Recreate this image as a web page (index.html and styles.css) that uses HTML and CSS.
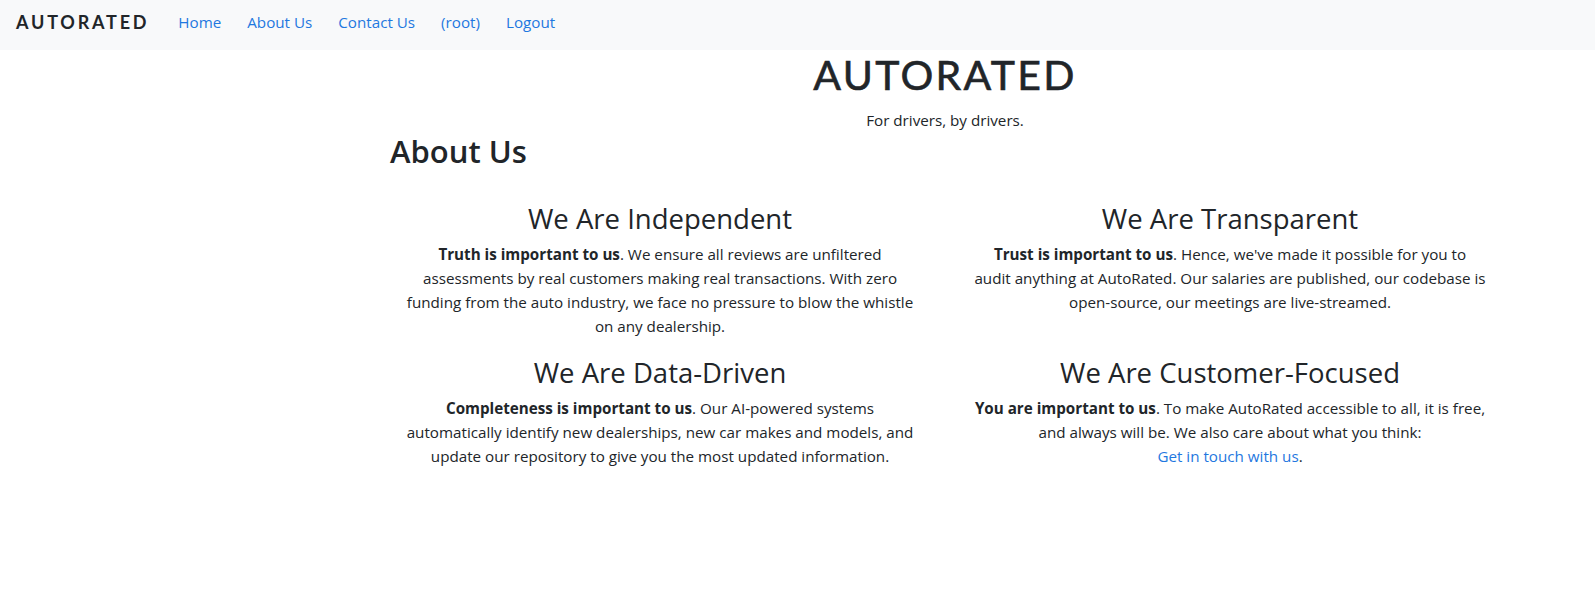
FILE: index.html
```html
<!DOCTYPE html>
<html lang="en">
<head>
<meta charset="utf-8">
<title>AutoRated - About Us</title>
<link rel="stylesheet" href="styles.css">
</head>
<body>
<nav class="navbar">
  <a class="brand" href="#">AUTORATED</a>
  <ul class="nav-links">
    <li><a href="#">Home</a></li>
    <li><a href="#">About Us</a></li>
    <li><a href="#">Contact Us</a></li>
    <li><a href="#">(root)</a></li>
    <li><a href="#">Logout</a></li>
  </ul>
</nav>
<main class="main">
  <div class="container">
    <header class="hero">
      <h1 class="hero-title">AUTORATED</h1>
      <p class="hero-sub">For drivers, by drivers.</p>
    </header>
    <h2 class="page-title">About Us</h2>
    <div class="values">
      <section class="value">
        <h3>We Are Independent</h3>
        <p><strong>Truth is important to us</strong>. We ensure all reviews are unfiltered assessments by real customers making real transactions. With zero funding from the auto industry, we face no pressure to blow the whistle on any dealership.</p>
      </section>
      <section class="value">
        <h3>We Are Transparent</h3>
        <p><strong>Trust is important to us</strong>. Hence, we've made it possible for you to<br>audit anything at AutoRated. Our salaries are published, our codebase is open-source, our meetings are live-streamed.</p>
      </section>
      <section class="value">
        <h3>We Are Data-Driven</h3>
        <p><strong>Completeness is important to us</strong>. Our AI-powered systems automatically identify new dealerships, new car makes and models, and update our repository to give you the most updated information.</p>
      </section>
      <section class="value">
        <h3>We Are Customer-Focused</h3>
        <p><strong>You are important to us</strong>. To make AutoRated accessible to all, it is free, and always will be. We also care about what you think:<br><a href="#">Get in touch with us</a>.</p>
      </section>
    </div>
  </div>
</main>
</body>
</html>
```

FILE: styles.css
```css
* { box-sizing: border-box; }

body {
  margin: 0;
  font-family: "Open Sans", "Noto Sans", "Liberation Sans", sans-serif;
  font-size: 15.2px;
  line-height: 24px;
  color: #212529;
  background: #fff;
}

a { color: #1f78e0; text-decoration: none; }

.navbar {
  display: flex;
  align-items: center;
  height: 50px;
  padding: 0 16px 6px;
  background: #f8f9fa;
}

.brand {
  color: #212529;
  font-family: "Lato", "Open Sans", sans-serif;
  font-size: 18px;
  font-weight: 700;
  letter-spacing: 2.8px;
  margin-right: 16px;
}

.nav-links {
  display: flex;
  list-style: none;
  margin: 0;
  padding: 0;
}

.nav-links a {
  display: block;
  padding: 0 13px;
  font-size: 15.2px;
  line-height: 24px;
}

.main {
  margin-left: 295px;
}

.container {
  max-width: 1140px;
  margin: 0 auto;
  padding: 0 15px;
}

.hero {
  text-align: center;
}

.hero-title {
  margin: 0;
  font-family: "Lato", "Open Sans", sans-serif;
  font-size: 41px;
  font-weight: 400;
  line-height: 50px;
  letter-spacing: 2.3px;
  -webkit-text-stroke: 0.6px #212529;
}

.hero-sub {
  margin: 8px 0 0;
  line-height: 24px;
}

.page-title {
  margin: 0 0 32px;
  font-size: 31px;
  font-weight: 600;
  line-height: 38px;
}

.values {
  display: grid;
  grid-template-columns: 1fr 1fr;
  column-gap: 30px;
}

.value {
  text-align: center;
}

.value h3 {
  margin: 0 0 7px;
  font-size: 27.5px;
  font-weight: 400;
  line-height: 33px;
}

.value p {
  margin: 0 auto 18px;
  max-width: 520px;
}

strong { font-weight: 700; }
```
